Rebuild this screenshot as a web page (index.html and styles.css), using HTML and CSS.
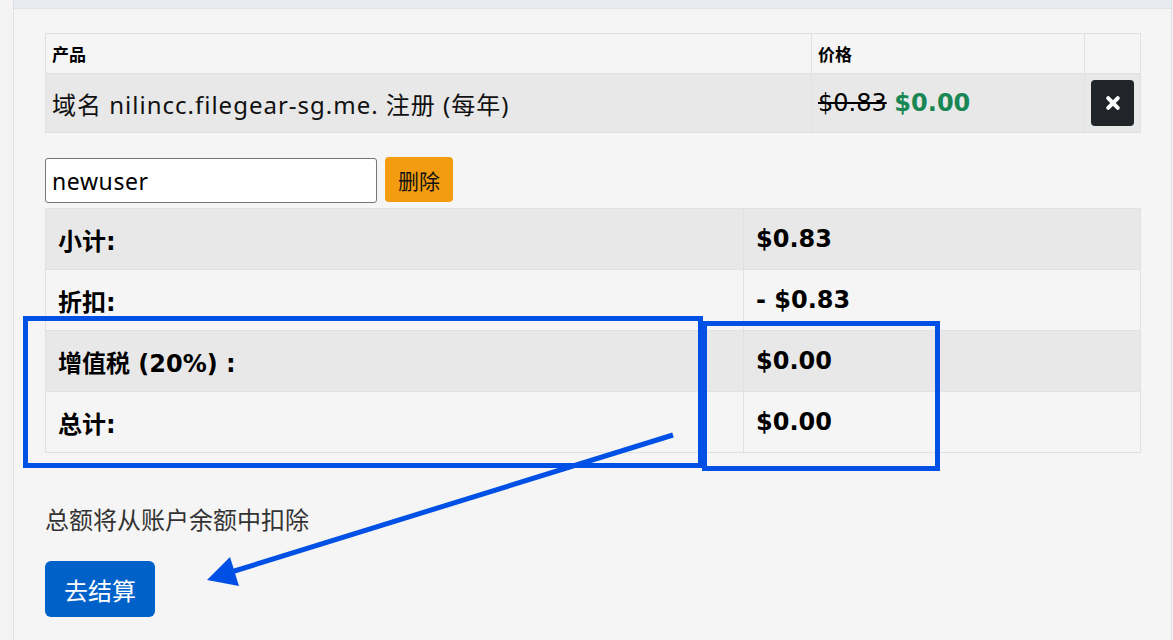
FILE: index.html
```html
<!DOCTYPE html>
<html lang="zh">
<head>
<meta charset="utf-8">
<title>购物车</title>
<link rel="stylesheet" href="styles.css">
</head>
<body>
<div class="panel">
  <div class="panel-top"></div>
  <div class="panel-body">
    <table class="items">
      <thead>
        <tr><th class="c-prod">产品</th><th class="c-price">价格</th><th class="c-act"></th></tr>
      </thead>
      <tbody>
        <tr>
          <td class="prod">域名 nilincc.filegear-sg.me. 注册 (每年)</td>
          <td class="price"><s class="old">$0.83</s> <b class="new">$0.00</b></td>
          <td class="act"><button class="btn-x" aria-label="删除"><svg width="16" height="16" viewBox="0 0 16 16"><path d="M3.2 3.2 L12.8 12.8 M12.8 3.2 L3.2 12.8" stroke="#fff" stroke-width="4" stroke-linecap="round"/></svg></button></td>
        </tr>
      </tbody>
    </table>

    <div class="promo">
      <input class="promo-input" type="text" value="newuser">
      <button class="btn-remove">删除</button>
    </div>

    <table class="totals">
      <tr class="odd"><td class="lbl">小计:</td><td class="val">$0.83</td></tr>
      <tr><td class="lbl">折扣:</td><td class="val">- $0.83</td></tr>
      <tr class="odd"><td class="lbl">增值税 (20%) :</td><td class="val">$0.00</td></tr>
      <tr><td class="lbl">总计:</td><td class="val">$0.00</td></tr>
    </table>

    <p class="note">总额将从账户余额中扣除</p>
    <button class="btn-checkout">去结算</button>
  </div>
</div>

<svg class="annot" width="1173" height="640" viewBox="0 0 1173 640">
  <rect x="25.5" y="318.5" width="675" height="147" fill="none" stroke="#0050e5" stroke-width="5"/>
  <rect x="704.5" y="323.5" width="233" height="145" fill="none" stroke="#0050e5" stroke-width="5"/>
  <line x1="673" y1="435" x2="228" y2="573" stroke="#0050e5" stroke-width="5"/>
  <polygon points="207,580 230,557 239,586" fill="#0050e5"/>
</svg>
</body>
</html>
```

FILE: styles.css
```css
html, body {
  margin: 0;
  padding: 0;
}
body {
  background: #f3f3f3;
  font-family: "Noto Sans", "Noto Sans CJK SC", sans-serif;
  color: #000;
  height: 640px;
  overflow: hidden;
  position: relative;
}
.panel {
  margin-left: 13px;
  width: 1157px;
  background: #f5f5f5;
  border-left: 1px solid #dcdfe4;
  border-right: 1px solid #dcdfe4;
  min-height: 640px;
}
.panel-top {
  height: 8px;
  background: #e8ecf0;
  border-bottom: 1px solid #dee3e8;
}
.panel-body {
  padding: 24px 0 0 31px;
}
table {
  border-collapse: collapse;
  width: 1096px;
}
.items th, .items td {
  border: 1px solid #dee2e6;
}
.items th {
  height: 39px;
  padding: 0 6px;
  text-align: left;
  font-family: "Noto Sans CJK SC", sans-serif;
  font-size: 17px;
  font-weight: 700;
  background: #f5f5f5;
}
.c-prod { width: 753px; }
.c-price { width: 260px; }
.items tbody td {
  height: 58px;
  background: #e8e8e8;
  padding: 0 6px;
}
.prod {
  font-family: "Noto Sans", "Noto Sans CJK SC", sans-serif;
  font-size: 24px;
  letter-spacing: 1px;
  color: #111;
}
.price {
  font-family: "DejaVu Sans", "Noto Sans CJK SC", sans-serif;
  font-size: 24px;
}
.old {
  font-weight: 400;
  color: #000;
}
.new {
  color: #198754;
  font-weight: 700;
}
.act {
  text-align: center;
}
.btn-x {
  width: 43px;
  height: 46px;
  border: 0;
  border-radius: 4px;
  background: #212529;
  display: flex;
  align-items: center;
  justify-content: center;
  padding: 0;
  margin: 0 auto;
}
.promo {
  display: flex;
  align-items: flex-start;
  gap: 8px;
  margin-top: 24px;
}
.promo-input {
  box-sizing: border-box;
  width: 332px;
  height: 45px;
  margin-top: 1px;
  border: 1px solid #767676;
  border-radius: 3px;
  background: #fff;
  font-family: "Noto Sans", sans-serif;
  font-size: 23px;
  letter-spacing: 0.6px;
  padding: 0 6px;
  color: #000;
}
.btn-remove {
  width: 68px;
  height: 45px;
  border: 0;
  border-radius: 4px;
  background: #f39c0f;
  font-family: "Noto Sans CJK SC", sans-serif;
  font-size: 21px;
  color: #111;
  padding: 0;
}
.totals {
  margin-top: 5px;
}
.totals td {
  height: 60px;
  border: 1px solid #dee2e6;
  padding: 0 12px;
  font-family: "DejaVu Sans", "Noto Sans CJK SC", sans-serif;
  font-weight: 700;
  font-size: 24px;
}
.totals .lbl {
  width: 673px;
}
.totals tr.odd td {
  background: #e8e8e8;
}
.note {
  margin: 50px 0 0;
  font-family: "Noto Sans CJK SC", sans-serif;
  font-size: 24px;
  line-height: 32px;
  color: #333;
}
.btn-checkout {
  margin-top: 26px;
  width: 110px;
  height: 56px;
  border: 0;
  border-radius: 6px;
  background: #0062c9;
  color: #fff;
  font-family: "Noto Sans CJK SC", sans-serif;
  font-size: 24px;
  padding: 0;
}
.annot {
  position: absolute;
  left: 0;
  top: 0;
  pointer-events: none;
}
```
